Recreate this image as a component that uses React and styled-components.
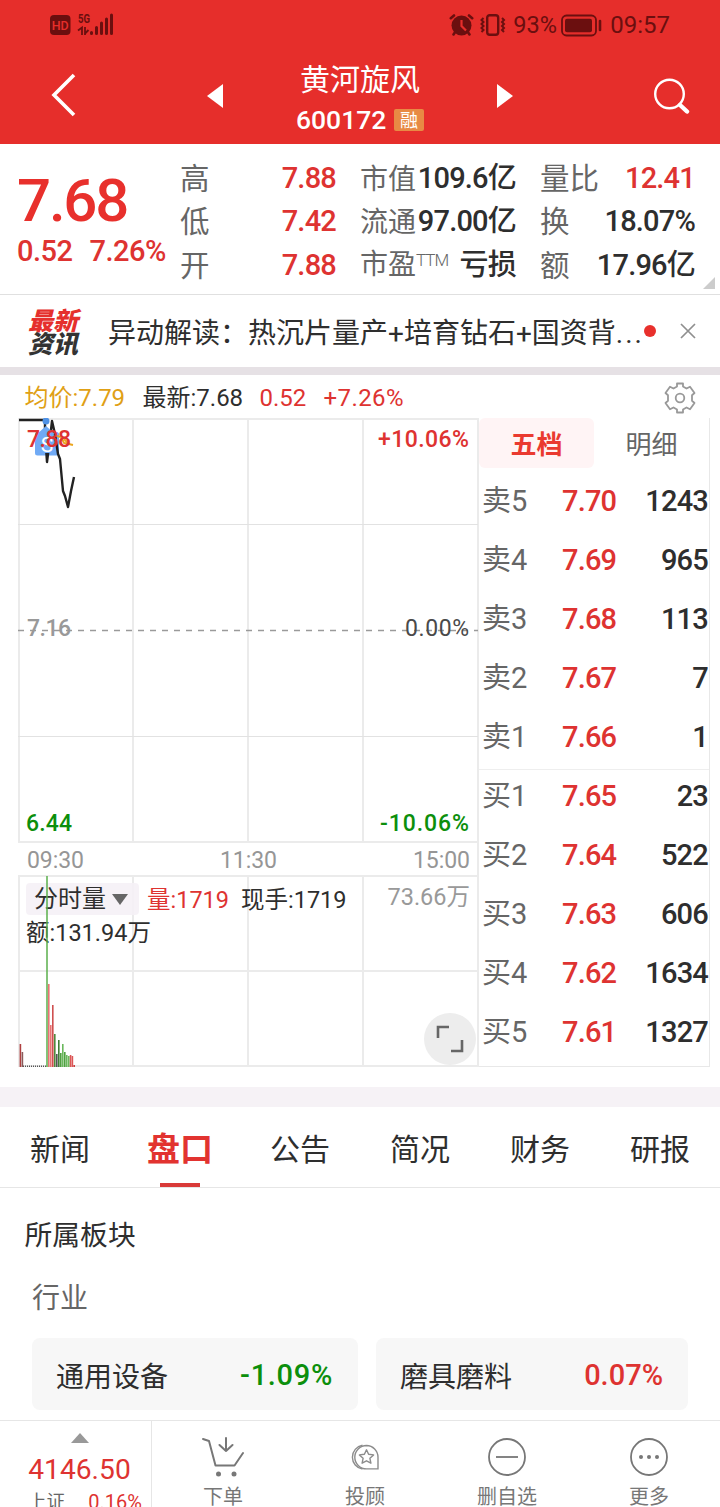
import React from 'react';
import styled, { createGlobalStyle } from 'styled-components';

const RED = '#de3331';
const GREEN = '#0c8f0c';
const DARK = '#2e2e2e';
const GRAY = '#666';
const STATUS = '#6b0f0f';

const quotes = [
  [
    { label: '高', value: '7.88', color: RED },
    { label: '低', value: '7.42', color: RED },
    { label: '开', value: '7.88', color: RED },
  ],
  [
    { label: '市值', value: '109.6亿' },
    { label: '流通', value: '97.00亿' },
    { label: '市盈', sup: 'TTM', value: '亏损' },
  ],
  [
    { label: '量比', value: '12.41', color: RED },
    { label: '换', value: '18.07%' },
    { label: '额', value: '17.96亿' },
  ],
];

const sells = [
  ['卖5', '7.70', '1243'],
  ['卖4', '7.69', '965'],
  ['卖3', '7.68', '113'],
  ['卖2', '7.67', '7'],
  ['卖1', '7.66', '1'],
];

const buys = [
  ['买1', '7.65', '23'],
  ['买2', '7.64', '522'],
  ['买3', '7.63', '606'],
  ['买4', '7.62', '1634'],
  ['买5', '7.61', '1327'],
];

const tabs = ['新闻', '盘口', '公告', '简况', '财务', '研报'];

// x, height, color of every minute bar
const volumes = [
  [1.6, 23, '#b04040'],
  [3.6, 15, '#8a5a5a'],
  [30, 83, '#e87474'],
  [32, 42, '#e87474'],
  [34, 62, '#cf5050'],
  [36, 33, '#4f8a3c'],
  [38, 13, '#555'],
  [40, 27, '#3f7f35'],
  [42, 14, '#4fa040'],
  [44, 23, '#6ab85c'],
  [46, 15, '#4fa040'],
  [48, 12, '#6ab85c'],
  [50, 11, '#6ab85c'],
  [51.8, 12, '#dc5555'],
  [53.6, 11, '#dc5555'],
  [55.4, 2, '#c94040'],
];

function StatusBar() {
  return (
    <Status>
      <svg width="64" height="24" viewBox="0 0 64 24">
        <rect x="0" y="3" width="20.5" height="20" rx="4" fill={STATUS} />
        <text x="10.2" y="17.5" fontSize="12.5" fontWeight="500" textAnchor="middle" fill="#e62e2b">
          HD
        </text>
        <text x="28" y="11" fontSize="12.5" fontWeight="700" textLength="12" lengthAdjust="spacingAndGlyphs" fill={STATUS}>
          5G
        </text>
        <path d="M28 18.500l4-3v7.500M35 15v8M35 21.500l3.500-3.500" stroke={STATUS} strokeWidth="1.8" fill="none" />
        <path d="M41.5 21.500v-1M46.5 21.500v-6M51.5 21.500V11M56.5 21.500V7M61.5 21.500V3" stroke={STATUS} strokeWidth="3" strokeLinecap="round" />
      </svg>
      <StatusRight>
        <svg width="25" height="24" viewBox="0 0 25 24">
          <circle cx="12.5" cy="12.5" r="10" fill={STATUS} />
          <path d="M1.8 5.2L5 2.500M23.200 5.200L20 2.500M4.500 21.500l2-3M20.500 21.500l-2-3" stroke={STATUS} strokeWidth="2.6" strokeLinecap="round" />
          <path d="M12.5 7v6l4.5 4.5" stroke="#e62e2b" strokeWidth="2.2" fill="none" />
        </svg>
        <Vibrate width="28" height="24" viewBox="0 0 28 24">
          <rect x="8.2" y="2.2" width="11" height="19.6" rx="2.5" stroke={STATUS} strokeWidth="2.4" fill="none" />
          <path d="M4.5 5l-2 2 2 2-2 2 2 2-2 2 2 2-2 2M23 5l2 2-2 2 2 2-2 2 2 2-2 2 2 2" stroke={STATUS} strokeWidth="2" fill="none" />
        </Vibrate>
        <StatusText>93%</StatusText>
        <svg width="42" height="24" viewBox="0 0 42 24">
          <rect x="2" y="2.5" width="34" height="20" rx="4.5" stroke={STATUS} strokeWidth="1.8" fill="none" />
          <rect x="5" y="5.8" width="27" height="13.4" rx="2" fill={STATUS} />
          <path d="M40 8v9" stroke={STATUS} strokeWidth="2.6" strokeLinecap="round" />
        </svg>
        <Clock>09:57</Clock>
      </StatusRight>
    </Status>
  );
}

function Chart() {
  return (
    <svg width="461" height="650" viewBox="0 0 461 650">
      <path d="M1 0v424M115 0v424M230 0v424M345 0v424M0 1h460M0 424h460M1 458v191M115 458v191M230 458v191M345 458v191M0 458h460M0 553h460M0 648h460M460 0v649" stroke="#ebebeb" strokeWidth="2" fill="none" />
      <path d="M0 106.5h460M0 318.5h460" stroke="#e2e2e2" strokeWidth="1" />
      <path d="M0 212.5h460" stroke="#9a9a9a" strokeWidth="1.6" strokeDasharray="6 6" />
      <rect x="17" y="14" width="24" height="23.5" rx="2.5" fill="#70aaf5" />
      <path d="M1 2h26v14l2 28 4-32 1-9 3 13 3 20 2 5 3 32 2 5 3 11 3-16 3-14" stroke="#222" strokeWidth="2.4" fill="none" strokeLinejoin="round" />
      <path d="M39 18l4 1 3 6 9 2M46 21l5 5" stroke="#eba51e" strokeWidth="2" fill="none" />
      <path d="M19 16l9-8 9 8z" fill="#70aaf5" />
      <rect x="23" y="16" width="12" height="19" fill="#70aaf5" />
      <circle cx="28" cy="3" r="3.5" fill="#4f92e6" />
      <text x="29" y="34" fontSize="21" textAnchor="middle" fill="#fff">S</text>
      <text x="9" y="29" fontSize="23" fontWeight="500" textLength="44" fill={RED}>7.88</text>
      <text x="360" y="29" fontSize="23" fontWeight="500" textLength="91" fill={RED}>+10.06%</text>
      <text x="9" y="218" fontSize="23" fontWeight="500" textLength="44" fill="#999">7.16</text>
      <text x="387" y="218" fontSize="23" textLength="64" fill="#4a4a4a">0.00%</text>
      <text x="8" y="413" fontSize="23" fontWeight="500" textLength="46" fill={GREEN}>6.44</text>
      <text x="362" y="413" fontSize="23" fontWeight="500" textLength="89" fill={GREEN}>-10.06%</text>
      <text x="9" y="450" fontSize="23" textLength="57" fill="#969696">09:30</text>
      <text x="202" y="450" fontSize="23" textLength="57" fill="#969696">11:30</text>
      <text x="395" y="450" fontSize="23" textLength="57" fill="#969696">15:00</text>
      <path d="M5 648.3h24" stroke="#555" strokeWidth="1.4" strokeDasharray="1 1" />
      {volumes.map(([x, h, color]) => (
        <rect key={x} x={x} y={649 - h} width="1.6" height={h} fill={color} />
      ))}
    </svg>
  );
}

function BookRow({ row }) {
  const [label, price, count] = row;
  return (
    <Level>
      <LevelName>{label}</LevelName>
      <LevelPrice>{price}</LevelPrice>
      <LevelCount>{count}</LevelCount>
    </Level>
  );
}

export default function App() {
  return (
    <Page>
      <GlobalStyle />
      <Header>
        <StatusBar />
        <Nav>
          <Back width="26" height="46" viewBox="0 0 26 46">
            <path d="M23 3L3 23l20 20" stroke="#fff" strokeWidth="3.6" fill="none" />
          </Back>
          <Arrow $left="130px">
            <path d="M16 0v24L0 12z" fill="#fff" />
          </Arrow>
          <Title>
            <Name>黄河旋风</Name>
            <Code>
              600172 <Badge>融</Badge>
            </Code>
          </Title>
          <Arrow>
            <path d="M0 0v24l16-12z" fill="#fff" />
          </Arrow>
          <Search width="38" height="38" viewBox="0 0 38 38">
            <circle cx="17.5" cy="16" r="14.3" stroke="#fff" strokeWidth="2.4" fill="none" />
            <path d="M28 27l7 6.500" stroke="#fff" strokeWidth="4.4" strokeLinecap="round" />
          </Search>
        </Nav>
      </Header>

      <Quote>
        <Current>
          <Price>7.68</Price>
          <Change>
            <span>0.52</span>
            <span>7.26%</span>
          </Change>
        </Current>
        <Stats>
          {quotes.map((column, i) => (
            <StatColumn key={i}>
              {column.map((item) => (
                <Stat key={item.label}>
                  <StatLabel $single={item.label.length === 1 || i === 2}>
                    {item.label}
                    {item.sup && <Sup>{item.sup}</Sup>}
                  </StatLabel>
                  <StatValue $color={item.color}>{item.value}</StatValue>
                </Stat>
              ))}
            </StatColumn>
          ))}
        </Stats>
        <Corner />
      </Quote>

      <News>
        <NewsLogo>
          <LogoLine $color="#e5302d">最新</LogoLine>
          <LogoLine $color="#333">资讯</LogoLine>
        </NewsLogo>
        <NewsText>
          异动解读：热沉片量产+培育钻石+国资背<Dots>...</Dots>
        </NewsText>
        <Dot />
        <svg width="16" height="16" viewBox="0 0 16 16">
          <path d="M1 1l14 14M15 1L1 15" stroke="#8f8f8f" strokeWidth="1.7" />
        </svg>
      </News>

      <Legend>
        <LegendItem $color="#e0a015" $width="118px">均价:7.79</LegendItem>
        <LegendItem $width="117px">最新:7.68</LegendItem>
        <LegendItem $color={RED} $width="64px">0.52</LegendItem>
        <LegendItem $color={RED} $spacing="0.4px">+7.26%</LegendItem>
        <Gear width="32" height="32" viewBox="0 0 32 32">
          <path
            d="M13 1.500h6v3l3.500 2 3.500-1.800 4.500 6.300-2.500 2.200v5.600l2.500 2.200-4.500 6.300-3.500-1.800-3.500 2v3h-6v-3l-3.500-2L6 27.300 1.500 21 4 18.800v-5.600L1.500 11 6 4.700l3.500 1.800 3.500-2z"
            stroke="#999"
            strokeWidth="1.8"
            strokeLinejoin="round"
            fill="none"
          />
          <circle cx="16" cy="16" r="4.3" stroke="#999" strokeWidth="1.8" fill="none" />
        </Gear>
      </Legend>

      <Market>
        <ChartBox>
          <Chart />
          <VolumeHead>
            <VolumeLine>
              <Picker>
                分时量
                <svg width="16" height="11" viewBox="0 0 16 11">
                  <path d="M0 0h16L8 11z" fill="#666" />
                </svg>
              </Picker>
              <VolumeText $color={RED} $width="94px">量:1719</VolumeText>
              <VolumeText>现手:1719</VolumeText>
              <VolumeMax>73.66万</VolumeMax>
            </VolumeLine>
            <VolumeText>额:131.94万</VolumeText>
          </VolumeHead>
          <PeakBar />
          <Expand>
            <svg width="28" height="28" viewBox="0 0 28 28">
              <path d="M2 13V2h11M26 15v11H15" stroke="#666" strokeWidth="2.6" fill="none" />
            </svg>
          </Expand>
        </ChartBox>
        <Book>
          <BookTabs>
            <BookTab $active>五档</BookTab>
            <BookTab>明细</BookTab>
          </BookTabs>
          <Levels $divider>
            {sells.map((row) => (
              <BookRow key={row[0]} row={row} />
            ))}
          </Levels>
          <Levels>
            {buys.map((row) => (
              <BookRow key={row[0]} row={row} />
            ))}
          </Levels>
        </Book>
      </Market>

      <Tabs>
        {tabs.map((tab) => (
          <Tab key={tab} $active={tab === '盘口'}>
            {tab}
          </Tab>
        ))}
      </Tabs>

      <Plates>
        <PlateTitle>所属板块</PlateTitle>
        <PlateGroup>行业</PlateGroup>
        <PlateList>
          <Plate>
            通用设备 <PlateValue $color={GREEN} $spacing="0.7px">-1.09%</PlateValue>
          </Plate>
          <Plate>
            磨具磨料 <PlateValue $color={RED}>0.07%</PlateValue>
          </Plate>
        </PlateList>
      </Plates>

      <BottomBar>
        <Index>
          <svg width="18" height="10" viewBox="0 0 18 10">
            <path d="M0 10h18L9 0z" fill="#999" />
          </svg>
          <IndexValue>4146.50</IndexValue>
          <IndexLine>
            <span>上证</span>
            <IndexChange>0.16%</IndexChange>
          </IndexLine>
        </Index>
        <Action>
          <svg width="42" height="42" viewBox="0 0 42 42">
            <path d="M1 3l6 2 6.5 24.5h19L41 17M24 2v13M17.5 9l6.500 6 6.500-6" stroke="#777" strokeWidth="2" fill="none" strokeLinejoin="round" strokeLinecap="round" />
            <circle cx="16.5" cy="38" r="2.5" fill="#777" />
            <circle cx="32" cy="38" r="2.5" fill="#777" />
          </svg>
          下单
        </Action>
        <Action>
          <svg width="42" height="42" viewBox="0 0 42 42">
            <path d="M18.500 9.300A12 12 0 0 0 18.500 33" stroke="#8c8c8c" strokeWidth="1.4" fill="none" />
            <path d="M22.500 9.500a11.700 11.700 0 1 0 0 23.400H34V21.200A11.700 11.700 0 0 0 22.500 9.500z" stroke="#8c8c8c" strokeWidth="1.4" fill="none" />
            <path d="M22.5 13.800l2.100 4.500 5 .6-3.700 3.400 1 4.900-4.400-2.400-4.400 2.400 1-4.900-3.700-3.400 5-.6z" stroke="#8c8c8c" strokeWidth="1.4" fill="none" strokeLinejoin="round" />
          </svg>
          投顾
        </Action>
        <Action>
          <svg width="42" height="42" viewBox="0 0 42 42">
            <circle cx="21" cy="21" r="18" stroke="#777" strokeWidth="1.8" fill="none" />
            <path d="M10 21h22" stroke="#777" strokeWidth="1.8" />
          </svg>
          删自选
        </Action>
        <Action>
          <svg width="42" height="42" viewBox="0 0 42 42">
            <circle cx="21" cy="21" r="18" stroke="#777" strokeWidth="1.8" fill="none" />
            <circle cx="13" cy="21" r="2" fill="#777" />
            <circle cx="21" cy="21" r="2" fill="#777" />
            <circle cx="29" cy="21" r="2" fill="#777" />
          </svg>
          更多
        </Action>
      </BottomBar>
    </Page>
  );
}

const GlobalStyle = createGlobalStyle`
  * {
    box-sizing: border-box;
  }
  body {
    margin: 0;
    overflow: hidden;
  }
  svg {
    display: block;
    flex-shrink: 0;
  }
`;

const Page = styled.div`
  width: 720px;
  height: 1507px;
  overflow: hidden;
  background: #fff;
  color: ${DARK};
  font-family: Roboto, 'Noto Sans CJK SC', sans-serif;
  white-space: nowrap;
`;

const Header = styled.header`
  height: 144px;
  background: #e62e2b;
`;

const Status = styled.div`
  display: flex;
  justify-content: space-between;
  height: 50px;
  padding: 12px 50px 0;
`;

const StatusRight = styled.div`
  display: flex;
  height: 24px;
  align-items: center;
  color: ${STATUS};
  font-size: 24px;
  padding-top: 1px;
`;

const Vibrate = styled.svg`
  margin-left: 5px;
`;

const StatusText = styled.span`
  width: 44px;
  margin-left: 6px;
  margin-right: 3px;
  font-size: 23.5px;
`;

const Clock = styled.span`
  margin-left: 8px;
`;

const Nav = styled.div`
  display: flex;
  align-items: center;
  height: 94px;
  padding: 0 30px 0 51px;
`;

const Back = styled.svg`
  margin-bottom: 5px;
`;

const Arrow = styled.svg.attrs({ width: 16, height: 24, viewBox: '0 0 16 24' })`
  margin-left: ${(props) => props.$left || '73px'};
  margin-bottom: 2px;
`;

const Title = styled.div`
  width: 128px;
  margin-left: 73px;
  color: #fff;
`;

const Name = styled.div`
  text-align: center;
  font-size: 30px;
  line-height: 42px;
  padding-top: 3px;
`;

const Code = styled.div`
  display: flex;
  justify-content: space-between;
  align-items: center;
  height: 38px;
  font-size: 26.5px;
  font-weight: 500;
`;

const Badge = styled.span`
  width: 30px;
  height: 22px;
  border-radius: 2px;
  background: #e88a44;
  font-size: 18px;
  line-height: 23px;
  font-weight: 400;
  text-align: center;
`;

const Search = styled.svg`
  margin-left: auto;
  margin-bottom: 1px;
`;

const Quote = styled.section`
  position: relative;
  display: flex;
  height: 151px;
  border-bottom: 1px solid #e0e0e0;
`;

const Current = styled.div`
  width: 180px;
  padding: 22px 0 0 17px;
  color: ${RED};
`;

const Price = styled.div`
  height: 68px;
  font-size: 60px;
  line-height: 69px;
  font-weight: 500;
  letter-spacing: -2.2px;
  color: #e8302c;
`;

const Change = styled.div`
  display: flex;
  gap: 17px;
  font-size: 29px;
  line-height: 34px;
  font-weight: 500;
  letter-spacing: -0.5px;
`;

const Stats = styled.div`
  display: grid;
  grid-template-columns: 156px 156px 155px;
  column-gap: 24px;
  padding-top: 12px;
`;

const StatColumn = styled.div`
  display: flex;
  flex-direction: column;
`;

const Stat = styled.div`
  display: flex;
  justify-content: space-between;
  align-items: center;
  height: 43.5px;
`;

const StatLabel = styled.span`
  color: ${GRAY};
  font-size: ${(props) => (props.$single ? '29.5px' : '28px')};
  line-height: 43px;
  padding-top: 3px;
`;

const Sup = styled.span`
  font-size: 17px;
  font-weight: 300;
  letter-spacing: -1px;
  position: relative;
  top: -8px;
`;

const StatValue = styled.span`
  color: ${(props) => props.$color || DARK};
  font-size: 29px;
  line-height: 43px;
  font-weight: 500;
  letter-spacing: -0.8px;
  padding-top: 1px;
`;

const Corner = styled.i`
  position: absolute;
  right: 5px;
  bottom: 5px;
  border-left: 12px solid transparent;
  border-bottom: 12px solid #ccc;
`;

const News = styled.section`
  display: flex;
  align-items: center;
  height: 80px;
  padding-left: 28px;
  border-bottom: 8px solid #e6e1e5;
`;

const NewsLogo = styled.div`
  width: 80px;
  padding-top: 4px;
`;

const LogoLine = styled.div`
  color: ${(props) => props.$color};
  font-size: 25px;
  line-height: 23px;
  font-weight: 900;
  font-style: italic;
`;

const NewsText = styled.div`
  width: 536px;
  font-size: 28px;
  line-height: 40px;
  padding-top: 6px;
`;

const Dots = styled.span`
  letter-spacing: 2px;
`;

const Dot = styled.i`
  width: 12px;
  height: 12px;
  margin-right: 24px;
  border-radius: 50%;
  background: #e8302c;
`;

const Legend = styled.div`
  display: flex;
  align-items: center;
  height: 43px;
  padding: 3px 24px 0 24.5px;
`;

const LegendItem = styled.span`
  width: ${(props) => props.$width || 'auto'};
  color: ${(props) => props.$color || DARK};
  font-size: 24px;
  line-height: 32px;
  letter-spacing: ${(props) => props.$spacing || 'normal'};
`;

const Gear = styled.svg`
  margin-left: auto;
`;

const Market = styled.section`
  display: flex;
  height: 689px;
  padding-left: 18px;
  border-bottom: 20px solid #f6f2f6;
`;

const ChartBox = styled.div`
  position: relative;
  width: 461px;
  height: 650px;
`;

const VolumeHead = styled.div`
  position: absolute;
  top: 465px;
  left: 8px;
  width: 444px;
`;

const VolumeLine = styled.div`
  display: flex;
  height: 33px;
`;

const Picker = styled.div`
  display: flex;
  align-items: center;
  justify-content: space-between;
  width: 113px;
  height: 32px;
  margin-right: 8px;
  padding: 0 11px 0 8px;
  border-radius: 4px;
  background: rgba(245, 241, 246, 0.9);
  font-size: 24px;
  line-height: 32px;
`;

const VolumeText = styled.div`
  width: ${(props) => props.$width || 'auto'};
  color: ${(props) => props.$color || DARK};
  font-size: 23.5px;
  line-height: 34px;
`;

const VolumeMax = styled.div`
  margin-left: auto;
  color: #999;
  font-size: 23.5px;
  line-height: 28px;
`;

const PeakBar = styled.i`
  position: absolute;
  left: 28px;
  top: 458px;
  width: 2px;
  height: 191px;
  background: rgba(90, 175, 75, 0.75);
`;

const Expand = styled.div`
  position: absolute;
  left: 406px;
  top: 595px;
  display: flex;
  align-items: center;
  justify-content: center;
  width: 52px;
  height: 52px;
  border-radius: 50%;
  background: #ededed;
`;

const Book = styled.div`
  width: 231px;
  height: 649px;
  border-right: 1px solid #e8e8e8;
  border-bottom: 1px solid #e8e8e8;
`;

const BookTabs = styled.div`
  display: flex;
  height: 57px;
`;

const BookTab = styled.div`
  width: 115px;
  height: 50px;
  border-radius: 6px;
  background: ${(props) => (props.$active ? '#fff4f5' : 'transparent')};
  color: ${(props) => (props.$active ? '#ea3a30' : GRAY)};
  font-size: 26px;
  font-weight: ${(props) => (props.$active ? 700 : 400)};
  line-height: 55px;
  text-align: center;
`;

const Levels = styled.div`
  border-bottom: ${(props) => (props.$divider ? '1px solid #eee' : 'none')};
  height: 295px;
`;

const Level = styled.div`
  display: flex;
  height: 59px;
  padding: 0 1px 0 3px;
  font-size: 29px;
  line-height: 53px;
`;

const LevelName = styled.span`
  width: 80px;
  color: ${GRAY};
`;

const LevelPrice = styled.span`
  color: ${RED};
  font-weight: 500;
  letter-spacing: -0.8px;
`;

const LevelCount = styled.span`
  margin-left: auto;
  font-weight: 500;
  letter-spacing: -0.8px;
`;

const Tabs = styled.nav`
  display: grid;
  grid-template-columns: repeat(6, 120px);
  height: 81px;
  border-bottom: 1px solid #e6e6e6;
`;

const Tab = styled.div`
  display: flex;
  flex-direction: column;
  align-items: center;
  color: ${(props) => (props.$active ? '#e23330' : DARK)};
  font-size: ${(props) => (props.$active ? '33px' : '30px')};
  font-weight: ${(props) => (props.$active ? 700 : 400)};
  line-height: 85px;
  height: 80px;
  &::after {
    content: '';
    width: 40px;
    height: 4px;
    margin-top: -9px;
    background: ${(props) => (props.$active ? '#d93a38' : 'transparent')};
  }
`;

const Plates = styled.section`
  height: 232px;
  padding: 27px 32px 0 24.5px;
`;

const PlateTitle = styled.div`
  font-size: 27.8px;
  line-height: 42px;
`;

const PlateGroup = styled.div`
  padding: 21px 0 0 7.5px;
  color: ${GRAY};
  font-size: 28px;
  line-height: 42px;
`;

const PlateList = styled.div`
  display: grid;
  grid-template-columns: 326px 312px;
  gap: 18px;
  padding: 18px 0 0 7.5px;
`;

const Plate = styled.div`
  display: flex;
  justify-content: space-between;
  align-items: center;
  height: 72px;
  padding: 2px 25px 0 24px;
  border-radius: 8px;
  background: #f7f7f7;
  font-size: 28px;
`;

const PlateValue = styled.span`
  color: ${(props) => props.$color};
  font-size: 29px;
  font-weight: 500;
  letter-spacing: ${(props) => props.$spacing || 'normal'};
`;

const BottomBar = styled.footer`
  display: grid;
  grid-template-columns: 152px repeat(4, 142px);
  height: 87px;
  border-top: 1px solid #e6e6e6;
  overflow: hidden;
`;

const Index = styled.div`
  display: flex;
  flex-direction: column;
  align-items: center;
  padding: 12px 0 0 8px;
  border-right: 1px solid #e6e6e6;
  color: ${RED};
`;

const IndexValue = styled.div`
  font-size: 28.2px;
  line-height: 34px;
  margin-top: 10px;
`;

const IndexLine = styled.div`
  display: flex;
  justify-content: space-between;
  width: 100%;
  padding: 0 9px 0 20px;
  color: ${GRAY};
  font-size: 18.5px;
  line-height: 30px;
`;

const IndexChange = styled.span`
  color: ${RED};
  font-size: 20px;
`;

const Action = styled.div`
  display: flex;
  flex-direction: column;
  align-items: center;
  gap: 8px;
  padding-top: 15px;
  color: #777;
  font-size: 20px;
  line-height: 22px;
`;
